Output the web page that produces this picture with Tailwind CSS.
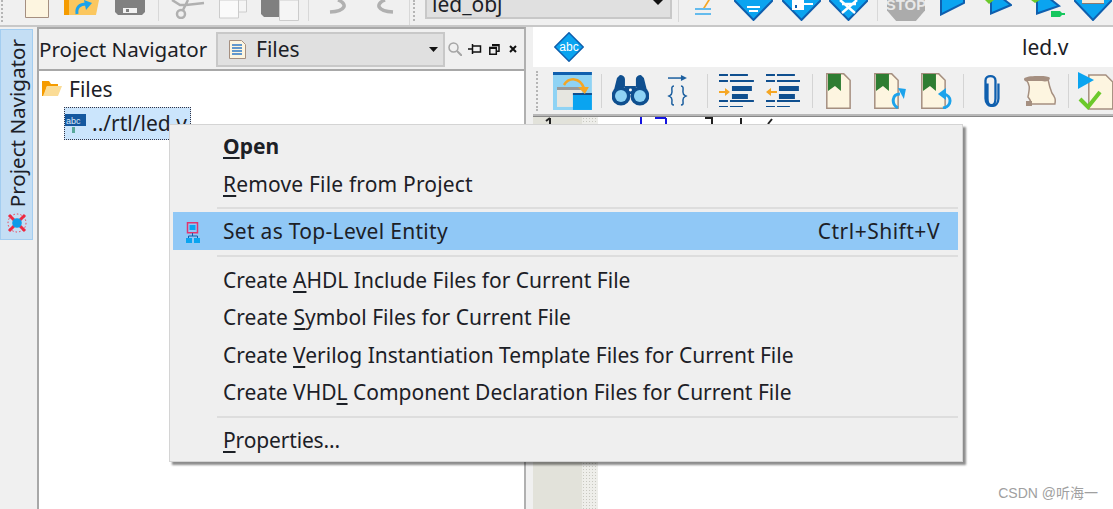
<!DOCTYPE html>
<html>
<head>
<meta charset="utf-8">
<script src="https://cdn.jsdelivr.net/npm/@tailwindcss/browser@4"></script>
</head>
<body class="m-0 bg-white">
<div class="relative w-[1113px] h-[509px] overflow-hidden flex flex-col bg-[#f0f0f0] text-[#1c2026] font-['Noto_Sans','Open_Sans',sans-serif] text-[21px]">

  <!-- main toolbar -->
  <div class="h-[27px] shrink-0 flex items-start border-b-2 border-[#c8c8c8] bg-[#f0f0f0] overflow-hidden">
    <div class="ml-[1px] w-[3px] h-[22px] border-l-2 border-dotted border-[#b5b5b5]"></div>
    <svg class="ml-[21px]" width="24" height="18" viewBox="0 0 24 18"><path d="M.5 0v17.500h23V0" fill="#fdf5e0" stroke="#a58f80"/></svg>
    <svg class="ml-[15px]" width="37" height="16" viewBox="0 0 37 16"><path d="M3 0h32l-3 15H0z" fill="#fbc75f"/><path d="M0 0h5v15H0z" fill="#f59b00"/><path d="M13 14c-1-7 3-10 9-10" fill="none" stroke="#1ca3ec" stroke-width="3"/><path d="M20 0l8 3-6 7z" fill="#1ca3ec"/></svg>
    <svg class="ml-[14px]" width="30" height="16" viewBox="0 0 30 16"><path d="M0 0h30v12l-3 3H3l-3-3z" fill="#808080"/><path d="M8 8h14v5H8z" fill="#f2f2f2"/><path d="M11 9h3v3h-3z" fill="#808080"/></svg>
    <div class="ml-[13px] w-px h-[21px] bg-[#d8d8d8]"></div>
    <svg class="ml-[9px]" width="37" height="19" viewBox="0 0 37 19"><g fill="none" stroke="#b0b0b0" stroke-width="2.500"><circle cx="13" cy="14" r="4"/><path d="M15 10 20 0M18 5 36 3M4 0l8 5 6 0"/></g></svg>
    <svg class="ml-[14px]" width="28" height="19" viewBox="0 0 28 19"><path d="M6.500 0h21v12H6.500z" fill="#f5f5f5" stroke="#ccc"/><path d="M.5 0h19v18H.5z" fill="#fafafa" stroke="#ccc"/></svg>
    <svg class="ml-[14px]" width="39" height="21" viewBox="0 0 39 21"><path d="M0 0h18v17H3l-3-3z" fill="#808080"/><path d="M18.500 0h19v20.500h-19z" fill="#f5f5f5" stroke="#ccc"/></svg>
    <div class="ml-[8px] w-px h-[21px] bg-[#d8d8d8]"></div>
    <svg class="ml-[19px]" width="24" height="14" viewBox="0 0 24 14"><path d="M10 0c10 4 8 11-8 12" fill="none" stroke="#b0b0b0" stroke-width="3.500"/></svg>
    <svg class="ml-[19px]" width="24" height="14" viewBox="0 0 24 14"><path d="M14 0C4 4 6 11 22 12" fill="none" stroke="#b0b0b0" stroke-width="3.500"/></svg>
    <div class="ml-[14px] w-px h-[26px] bg-[#d8d8d8]"></div>
    <div class="ml-[3px] w-[3px] h-[21px] border-l-2 border-dotted border-[#b5b5b5]"></div>
    <div class="ml-[9px] relative w-[247px] h-[19px] bg-[#e0e0e0] border-2 border-t-0 border-[#c8c8c8] flex items-end overflow-hidden">
      <span class="pl-[5px] leading-[20px] text-[21px] mb-[3px]">led_obj</span>
      <svg class="absolute right-[7px] top-0" width="10" height="5" viewBox="0 0 10 5"><path d="M0 0h10L5 5z" fill="#111"/></svg>
    </div>
    <div class="ml-[6px] w-px h-[22px] bg-[#d8d8d8]"></div>
    <svg class="ml-[15px]" width="18" height="16" viewBox="0 0 18 16"><path d="M14 0 9 8l2 0 5-8z" fill="#f5a623"/><path d="M1 9h16M1 14h16" stroke="#36a9ec" stroke-width="1.500"/></svg>
    <svg class="ml-[22px]" width="39" height="21" viewBox="0 0 39 21"><path d="M-2-2h43L19.500 20z" fill="#0aa4f0" stroke="#0f5fae" stroke-width="2"/><path d="M13 7h13M15 11h9" stroke="#fff" stroke-width="2"/></svg>
    <svg class="ml-[9px]" width="39" height="21" viewBox="0 0 39 21"><path d="M-2-2h43L19.500 20z" fill="#0aa4f0" stroke="#0f5fae" stroke-width="2"/><path d="M10 0h12v3h9v2h-9v5H10z" fill="#fff"/><path d="M13 5h2v3h-2z" fill="#0f5fae"/></svg>
    <svg class="ml-[8px]" width="39" height="21" viewBox="0 0 39 21"><path d="M-2-2h43L19.500 20z" fill="#0aa4f0" stroke="#0f5fae" stroke-width="2"/><path d="M11 0 26 13M28 0 13 13M13 4h14" stroke="#fff" stroke-width="2.500" fill="none"/></svg>
    <div class="ml-[9px] w-px h-[21px] bg-[#d8d8d8]"></div>
    <div class="ml-[9px] w-[38px] h-[21px] bg-[#ababab] [clip-path:polygon(0_0,100%_0,100%_50%,76%_100%,24%_100%,0_50%)] flex items-end justify-center overflow-hidden">
      <span class="text-[#e8e8e8] font-bold text-[15px] leading-[15px] mb-[9px] font-['Liberation_Sans',sans-serif]">STOP</span>
    </div>
    <svg class="ml-[15px]" width="25" height="16" viewBox="0 0 25 16"><path d="M1-2v16.500L24 3V-2z" fill="#0aa4f0" stroke="#0f5fae" stroke-width="2"/></svg>
    <svg class="ml-[19px]" width="28" height="15" viewBox="0 0 28 15"><path d="M7-2v15.500L27 5 18-2z" fill="#0aa4f0" stroke="#0f5fae" stroke-width="2"/><path d="M1 0l4 4 5-4z" fill="#6cc92b"/></svg>
    <svg class="ml-[19px]" width="34" height="19" viewBox="0 0 34 19"><path d="M6-2v15.500L28 6 18-2z" fill="#0aa4f0" stroke="#0f5fae" stroke-width="2"/><path d="M0 0l4 3 5-3z" fill="#6cc92b"/><path d="M20 11h9l2 2h3v2h-3l-2 2h-9z" fill="#16c75e"/></svg>
    <svg class="ml-[9px]" width="38" height="21" viewBox="0 0 38 21"><path d="M-2-2h42L19 20z" fill="#0aa4f0" stroke="#0f5fae" stroke-width="2"/><path d="M8 0h22v3H8z" fill="#f2ead8"/><path d="M8 3h22v1H8z" fill="#8a7a70"/></svg>
  </div>

  <!-- body -->
  <div class="flex-1 flex min-h-0">
    <!-- side dock tab -->
    <div class="w-[37px] shrink-0 pt-[2px]">
      <div class="w-[33px] h-[211px] bg-[#c4def4] border border-[#a3cdf0] flex flex-col items-center justify-end pb-[6px] gap-[6px]">
        <span class="[writing-mode:vertical-rl] rotate-180 leading-[24px] text-[20.600px] whitespace-nowrap">Project Navigator</span>
        <svg width="20" height="20" viewBox="0 0 20 20"><circle cx="10" cy="10" r="9" fill="none" stroke="#ee3b4e" stroke-width="1" stroke-dasharray="1.500 2"/><path d="M2 2l16 16M18 2 2 18" stroke="#ee2840" stroke-width="3"/><circle cx="10" cy="10" r="4.800" fill="#0d9be8"/></svg>
      </div>
    </div>

    <!-- project navigator panel -->
    <div class="w-[489px] shrink-0 flex flex-col border-x-2 border-t-2 border-[#a8a8a8] border-r-[#b0b0b0]">
      <div class="h-[42px] shrink-0 flex items-center border-b-2 border-[#a8a8a8] bg-[#f0f0f0]">
        <span class="w-[177px] shrink-0 whitespace-nowrap text-[20.600px]">Project Navigator</span>
        <div class="w-[229px] h-[35px] bg-[#e0e0e0] border-2 border-[#c8c8c8] flex items-center relative">
          <svg class="ml-[11px]" width="17" height="19" viewBox="0 0 17 19"><path d="M.5.5h12l4 4v14H.5z" fill="#fdf5e0" stroke="#a58f80"/><path d="M3 5h10M3 8h10M3 11h10M3 14h10" stroke="#2f7ac6" stroke-width="1.500"/></svg>
          <span class="ml-[10px] pt-[2px]">Files</span>
          <svg class="absolute right-[5px] top-[13px]" width="9" height="5" viewBox="0 0 9 5"><path d="M0 0h9L4.500 5z" fill="#111"/></svg>
        </div>
        <svg class="ml-[3px]" width="14" height="14" viewBox="0 0 14 14"><circle cx="5.500" cy="5.500" r="4.500" fill="none" stroke="#a5a5a5" stroke-width="1.500"/><path d="M9 9l5 5" stroke="#a5a5a5" stroke-width="2"/></svg>
        <svg class="ml-[6px]" width="14" height="10" viewBox="0 0 14 10"><path d="M0 5h4M4.500 0v10M4.500 2h8v6h-8" fill="none" stroke="#111" stroke-width="1.500"/></svg>
        <svg class="ml-[7px]" width="11" height="11" viewBox="0 0 11 11"><path d="M3 .8h7v6.500H7.500M.8 3.500h6.500v6.700H.8z" fill="none" stroke="#111" stroke-width="1.500"/><path d="M3 .8h7v1.500H3zM.8 3.500h6.500v1.500H.8z" fill="#111"/></svg>
        <svg class="ml-[9px]" width="8" height="8" viewBox="0 0 8 8"><path d="M1 1l6 6M7 1 1 7" stroke="#111" stroke-width="2"/></svg>
      </div>
      <div class="flex-1 bg-white">
        <div class="flex items-center h-[28px] mt-[4px] pl-[3px]">
          <svg width="20" height="16" viewBox="0 0 20 16"><path d="M0 0h7l2 3h7v2H5L2 15H0z" fill="#f59b00"/><path d="M5 5h15l-4 10H1z" fill="#fbdc96"/></svg>
          <span class="ml-[7px] pt-[2px]">Files</span>
        </div>
        <div class="ml-[25px] mt-[4px] w-[127px] h-[33px] bg-[#cbe5fc] border border-dotted border-[#334] flex items-center whitespace-nowrap overflow-hidden">
          <svg class="shrink-0" width="21" height="24" viewBox="0 0 21 24"><path d="M0 2h21v12H0z" fill="#15589f"/><path d="M7 15h3v6H7z" fill="#58a89a"/><text x="1" y="12" font-size="9" fill="#dcecfb" font-family="Liberation Sans">abc</text></svg>
          <span class="ml-[6px]">../rtl/led.v</span>
        </div>
      </div>
    </div>

    <!-- editor side -->
    <div class="flex-1 min-w-0 flex flex-col">
      <div class="h-[40px] shrink-0 ml-[7px] bg-white flex items-center">
        <svg class="ml-[21px]" width="30" height="30" viewBox="0 0 30 30"><path d="M15 .8 29.200 15 15 29.200.8 15z" fill="#0aa4f0" stroke="#0f5fae" stroke-width="1.500"/><text x="15" y="19" text-anchor="middle" font-size="12" fill="#fff" font-family="Liberation Sans">abc</text></svg>
        <span class="ml-[438px] pt-[2px]">led.v</span>
      </div>
      <div class="h-[49px] shrink-0 ml-[7px] flex items-center border-b-2 border-[#b8b8b8] bg-[#f0f0f0]">
        <div class="ml-[3px] w-[3px] h-[40px] border-l-2 border-dotted border-[#b5b5b5]"></div>
        <svg class="ml-[14px]" width="39" height="38" viewBox="0 0 39 38"><path d="M0 0h39v38H0z" fill="#8fd3f4"/><path d="M0 0h39v3H0z" fill="#0f5fae"/><path d="M4 15h25v20H4z" fill="#e6e6e0"/><path d="M4 15h25v3H4z" fill="#999"/><path d="M20 21h19v17H20z" fill="#0aa4f0"/><path d="M20 21h19v2H20z" fill="#0f4f90"/><path d="M11 13c5-8 16-8 20 3" fill="none" stroke="#f5a623" stroke-width="2.500"/><path d="M25 15h11l-4 7z" fill="#f5a623"/></svg>
        <div class="ml-[9px] w-px h-[34px] bg-[#d4d4d4]"></div>
        <svg class="ml-[10px]" width="37" height="31" viewBox="0 0 37 31"><g fill="#0f4f8f"><path d="M8 0c3 0 5 2 5 4v8h-2L7 22l-6-3L5 3z"/><path d="M29 0c-3 0-5 2-5 4v8h2l4 10 6-3L32 3z"/><circle cx="9" cy="21" r="9.500"/><circle cx="28" cy="21" r="9.500"/><path d="M13 11h11v8H13z"/></g><circle cx="9" cy="21" r="6" fill="#8fd3f4"/><circle cx="28" cy="21" r="6" fill="#8fd3f4"/><circle cx="18.500" cy="15" r="1.500" fill="#fff"/></svg>
        <svg class="ml-[18px]" width="21" height="31" viewBox="0 0 21 31"><path d="M1 3h16" stroke="#1c5f9f" stroke-width="1.500"/><path d="M14 0l6 3-6 3z" fill="#1c5f9f"/><path d="M7 11c-3 0-2 3-2 6s-1 3-3 4c2 1 3 1 3 4s-1 5 2 5M14 11c3 0 2 3 2 6s1 3 3 4c-2 1-3 1-3 4s1 5-2 5" fill="none" stroke="#1c5f9f" stroke-width="1.500"/></svg>
        <div class="ml-[19px] w-px h-[34px] bg-[#d4d4d4]"></div>
        <svg class="ml-[11px]" width="35" height="33" viewBox="0 0 35 33"><g fill="#0f4f8f"><path d="M0 0h9v2H0zM11 0h18v2H11zM0 6h9v2H0zM11 6h24v2H11zM13 12h20v5H13zM13 20h16v5H13zM0 26h9v2H0zM11 26h24v2H11zM0 32h9v1H0zM11 32h13v1H11z"/></g><path d="M0 17h6v-3l5 4-5 4v-3H0z" fill="#f5a623"/></svg>
        <svg class="ml-[12px]" width="35" height="33" viewBox="0 0 35 33"><g fill="#0f4f8f"><path d="M0 0h9v2H0zM11 0h18v2H11zM0 6h9v2H0zM11 6h24v2H11zM13 12h20v5H13zM13 20h16v5H13zM0 26h9v2H0zM11 26h24v2H11zM0 32h9v1H0zM11 32h13v1H11z"/></g><path d="M11 17H5v-3l-5 4 5 4v-3h6z" fill="#f5a623"/></svg>
        <div class="ml-[12px] w-px h-[34px] bg-[#d4d4d4]"></div>
        <svg class="ml-[13px]" width="25" height="36" viewBox="0 0 25 36"><path d="M.8.8h17l6.400 6.400v28H.8z" fill="#fdf5e0" stroke="#a58f80" stroke-width="1.500"/><path d="M2 1h13v17l-6-5-7 5z" fill="#2e7d32"/></svg>
        <svg class="ml-[23px]" width="33" height="36" viewBox="0 0 33 36"><path d="M.8.8h17l6.400 6.400v28H.8z" fill="#fdf5e0" stroke="#a58f80" stroke-width="1.500"/><path d="M2 1h13v17l-6-5-7 5z" fill="#2e7d32"/><path d="M24 35c-7-4-6-14 2-14" fill="none" stroke="#1ca3ec" stroke-width="3"/><path d="M24 15l8 1-2 10z" fill="#1ca3ec"/></svg>
        <svg class="ml-[14px]" width="33" height="36" viewBox="0 0 33 36"><path d="M.8.8h17l6.400 6.400v28H.8z" fill="#fdf5e0" stroke="#a58f80" stroke-width="1.500"/><path d="M2 1h13v17l-6-5-7 5z" fill="#2e7d32"/><path d="M22 35c9-1 10-13 0-14" fill="none" stroke="#1ca3ec" stroke-width="3"/><path d="M25 15l-8 6 8 6z" fill="#1ca3ec"/></svg>
        <div class="ml-[9px] w-px h-[34px] bg-[#d4d4d4]"></div>
        <svg class="ml-[19px]" width="18" height="33" viewBox="0 0 18 33"><path d="M5 9v15c0 9 8 9 8 0V6c0-6-10-6-10 0v18c0 10 13 10 13 0V9" transform="translate(-.5 .5)" fill="none" stroke="#0f5fae" stroke-width="2.300"/></svg>
        <svg class="ml-[22px]" width="33" height="30" viewBox="0 0 33 30"><path d="M3 3c4 6 4 8 2 18 3 3 3 5 3 7h24c1-5 0-7-3-11-2-5-3-9-4-14z" fill="#fdf5e0" stroke="#a58f80" stroke-width="1.500"/><path d="M1 3c0-4 26-4 26-1s-4 4-8 3H5C3 6 1 5 1 3zM3 25h6v5H3z" fill="#a58f80"/></svg>
        <div class="ml-[12px] w-px h-[34px] bg-[#d4d4d4]"></div>
        <svg class="ml-[9px] shrink-0" width="35" height="38" viewBox="0 0 35 38"><path d="M10.800 3h17l7 7v27h-24z" fill="#fdf5e0" stroke="#a58f80" stroke-width="1.500"/><path d="M0 0l16 8-16 9z" fill="#0aa4f0"/><path d="M2 27l8 8L22 20" fill="none" stroke="#6cc92b" stroke-width="4"/></svg>
      </div>
      <div class="flex-1 ml-[7px] flex border-t border-[#888]">
        <div class="w-[49px] bg-[#e2e2da] pl-[12px]">
          <svg class="block" width="8" height="9" viewBox="0 0 8 9"><path d="M5 1v8M5 1 1 4" fill="none" stroke="#222" stroke-width="2"/></svg>
        </div>
        <div class="w-[16px] bg-[radial-gradient(#c8c8c0_1px,#eeeeea_1px)] bg-[length:3px_3px]"></div>
        <div class="flex-1 bg-white">
          <svg class="block" width="200" height="10" viewBox="0 0 200 10"><path d="M43 0v8M68 1v7h-2M57 1h11" fill="none" stroke="#1414e0" stroke-width="2"/><path d="M107 1h7v7M143 1v7M170 7l4-5" fill="none" stroke="#222" stroke-width="2"/></svg>
        </div>
      </div>
    </div>
  </div>

  <!-- context menu -->
  <div class="absolute left-[169px] top-[124px] w-[794px] h-[338px] bg-[#efefef] border border-[#d4d4d4] pt-[3px] pl-[3px] pr-[4px] shadow-[3px_3px_2px_rgba(0,0,0,0.45)] flex flex-col">
    <div class="h-[37.500px] flex items-center pl-[50px] font-bold">
      <span><u class="underline-offset-3">O</u>pen</span>
    </div>
    <div class="h-[37.500px] flex items-center pl-[50px]">
      <span class="tracking-[0.17px]"><u class="underline-offset-3">R</u>emove File from Project</span>
    </div>
    <div class="h-[9px] ml-[44px] flex items-center"><div class="w-full h-[2px] bg-[#dddddd]"></div></div>
    <div class="h-[38px] flex items-center bg-[#90c8f6] relative">
      <svg class="absolute left-[13px] top-[10px]" width="15" height="21" viewBox="0 0 15 21"><path d="M1.500.800h10v10h-10z" fill="none" stroke="#e0356f" stroke-width="1.500"/><path d="M3.500 3h6v5h-6z" fill="#0aa4f0"/><path d="M6.500 11v3M2.500 16v-2h9v2" fill="none" stroke="#0f5fae"/><path d="M0 16h6v5H0zM8 16h6v5H8z" fill="#0aa4f0"/></svg>
      <span class="pl-[50px] pt-[2px] tracking-[0.3px]">Set as Top-Level Entity</span>
      <span class="ml-auto pr-[18px] pt-[2px] tracking-[0.5px]">Ctrl+Shift+V</span>
    </div>
    <div class="h-[11px] ml-[44px] flex items-center"><div class="w-full h-[2px] bg-[#dddddd]"></div></div>
    <div class="h-[37.500px] flex items-center pl-[50px]"><span class="pt-[2px]">Create <u class="underline-offset-3">A</u>HDL Include Files for Current File</span></div>
    <div class="h-[37.500px] flex items-center pl-[50px]"><span class="tracking-[0.05px]">Create <u class="underline-offset-3">S</u>ymbol Files for Current File</span></div>
    <div class="h-[37.500px] flex items-center pl-[50px]"><span class="pt-[2px]">Create <u class="underline-offset-3">V</u>erilog Instantiation Template Files for Current File</span></div>
    <div class="h-[37.500px] flex items-center pl-[50px]"><span>Create VHD<u class="underline-offset-3">L</u> Component Declaration Files for Current File</span></div>
    <div class="h-[11px] ml-[44px] flex items-center"><div class="w-full h-[2px] bg-[#dddddd]"></div></div>
    <div class="h-[37.500px] flex items-center pl-[50px]"><span class="tracking-[-0.15px]"><u class="underline-offset-3">P</u>roperties...</span></div>
  </div>

  <!-- watermark -->
  <div class="absolute right-[15px] top-[484px] text-[14px] leading-[18px] text-[#a0a0a0] font-['Liberation_Sans','Noto_Sans_CJK_SC',sans-serif]">CSDN @听海一</div>
</div>
</body>
</html>
